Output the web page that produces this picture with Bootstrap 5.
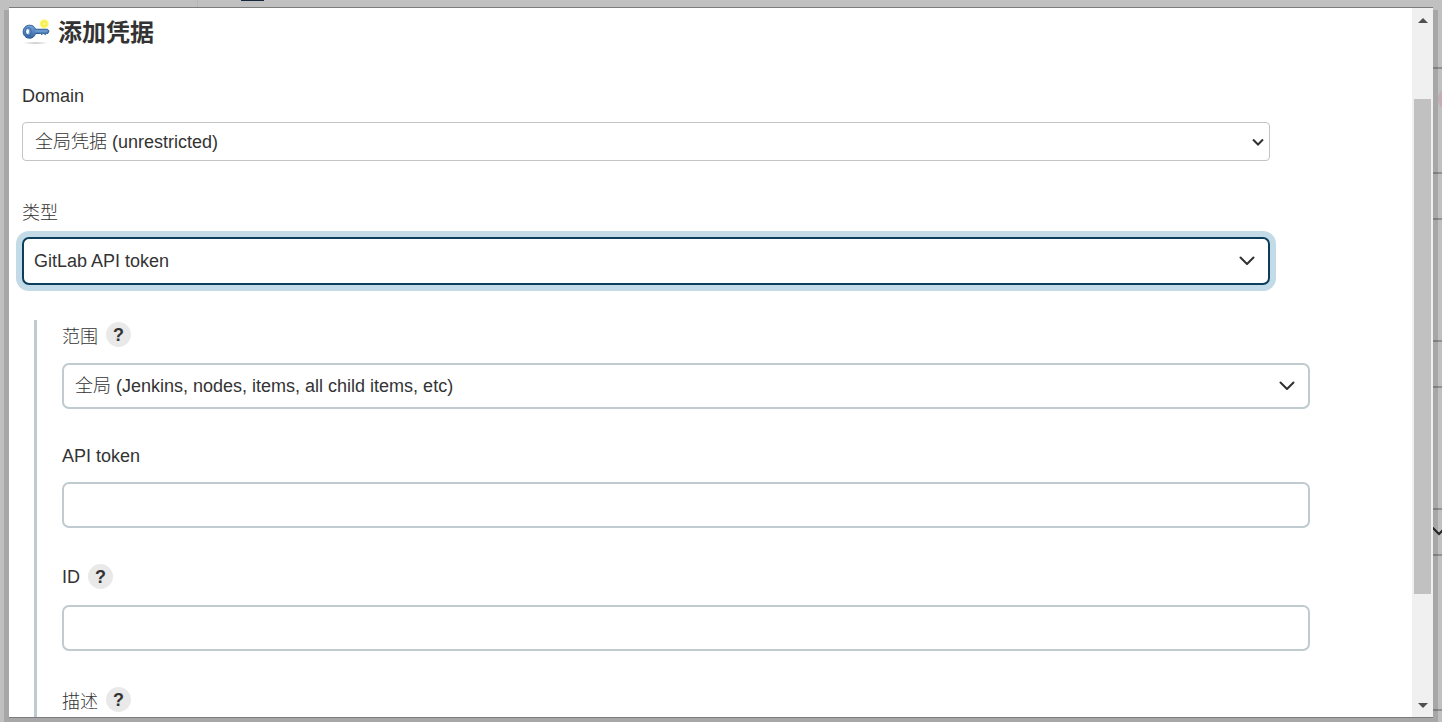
<!DOCTYPE html>
<html lang="zh-CN">
<head>
<meta charset="utf-8">
<meta name="viewport" content="width=device-width, initial-scale=1">
<title>添加凭据</title>
<link href="https://cdn.jsdelivr.net/npm/bootstrap@5.3.0/dist/css/bootstrap.min.css" rel="stylesheet">
<style>
  body { font-family: "Liberation Sans", "Noto Sans CJK SC Light", "Noto Sans CJK SC", sans-serif; font-size: 18px; font-weight: 300; line-height: 24px; color: #333; background: #c0c0c0; }
  .cjk { font-family: "Noto Sans CJK SC Light", "Noto Sans CJK SC", sans-serif; }

  /* dimmed page behind the dialog */
  .behind { inset: 0; }
  .behind-side { width: 9px; padding-top: 67px; }
  .behind-side .rule { height: 2px; background: #929292; flex: none; }
  .behind-side .box { height: 48px; border: solid #929292; border-width: 2px 0; flex: none; margin-bottom: 120px; }
  .behind-side .box:last-of-type { margin-bottom: 0; }
  .dot { width: 24px; height: 24px; margin: 18px 0 61px 5px; border-radius: 50%; background: #c2aeb2; flex: none; }
  .last-rule { margin-bottom: 11px; }
  .tab-mark { top: 0; left: 241px; width: 23px; height: 1px; background: #14273c; }
  .page-edge { top: 0; left: 197px; width: 1px; height: 8px; background: #b6b6b6; }
  .dialog-shadow { inset: 10px 4px 0; background: rgba(0, 0, 0, .13); }

  .shade { padding: 7px 9px 4px; }
  .dialog-frame { border-top: 1px solid #7c7c7c; border-bottom: 1px solid #7c7c7c; background: #fff; }
  .dialog-content { padding: 4px 142px 0 13px; }
  h1 { font-size: 24px; line-height: 38px; font-weight: 700; font-family: "Noto Sans CJK SC", sans-serif; }
  form { padding-top: 33px; }
  .first-field { margin-bottom: 37px; }
  .nested .field { margin-bottom: 34px; }
  .field-top { height: 26px; margin-bottom: 13px; }
  .field-top.with-help { height: 29px; margin-bottom: 14px; }

  .form-select, .form-control { font-size: 18px; font-weight: 300; line-height: 24px; color: #333; background-color: #fff; border: 2px solid #bfcbcf; border-radius: 7px; height: 46px; padding: 0 44px 0 11px; }
  .form-select { background-image: url("data:image/svg+xml,%3Csvg xmlns='http://www.w3.org/2000/svg' viewBox='0 0 16 10'%3E%3Cpath d='M1.5 1.5 8 8 14.500 1.500' fill='none' stroke='%23303030' stroke-width='2' stroke-linecap='round' stroke-linejoin='round'/%3E%3C/svg%3E"); background-size: 16px 10px; background-position: right 13px center; }
  .form-select.plain { height: 39px; border: 1px solid #c3c3c8; border-radius: 4px; padding-left: 12px; background-image: url("data:image/svg+xml,%3Csvg xmlns='http://www.w3.org/2000/svg' viewBox='0 0 12 8'%3E%3Cpath d='M1 1.500 6 6.500 11 1.500' fill='none' stroke='%23303030' stroke-width='2'/%3E%3C/svg%3E"); background-size: 12px 8px; background-position: right 5px center; }
  .form-select.active-field { height: 48px; padding-left: 10px; border-color: #0b3d5d; box-shadow: 0 0 0 6px #c3dae7; }
  .nested { margin: 35px -40px 0 12px; padding-left: 25px; border-left: 3px solid #bfcbcf; }
  .help { width: 25px; height: 25px; border: 0; border-radius: 50%; background: #e9e9e9; color: #333; font: 700 18px/24px "Liberation Sans", sans-serif; }

  .scroller { width: 21px; background: #f0f0f0; padding: 0 2px; }
  .scroller button { height: 24px; border: 0; background: transparent; }
  .before-thumb { flex: 67 1 0; }
  .thumb { flex: 495 1 0; background: #c1c1c1; }
  .after-thumb { flex: 99 1 0; }
</style>
</head>
<body class="vh-100 overflow-hidden position-relative">
<div class="behind position-absolute overflow-hidden d-flex justify-content-end" aria-hidden="true">
  <div class="page-edge position-absolute"></div>
  <div class="tab-mark position-absolute"></div>
  <div class="behind-side d-flex flex-column">
    <div class="rule"></div>
    <div class="dot"></div>
    <div class="box"></div>
    <div class="box"></div>
    <div class="box mb-0 d-flex align-items-center">
      <svg width="16" height="10" viewBox="0 0 16 10" class="flex-shrink-0"><path d="M-1 0 6 7 13 0" fill="none" stroke="#262626" stroke-width="2"/></svg>
    </div>
    <div class="rule last-rule mt-auto"></div>
  </div>
  <div class="dialog-shadow position-absolute"></div>
</div>

<div class="shade vh-100 position-relative">
  <main class="dialog-frame d-flex h-100">
    <div class="dialog-content flex-grow-1 overflow-hidden">
      <h1 class="d-flex align-items-center gap-2 mb-0">
        <svg width="28" height="28" viewBox="0 0 29 29" aria-hidden="true">
          <defs>
            <radialGradient id="glow"><stop offset="0" stop-color="#fffbd0"/><stop offset=".35" stop-color="#fff766"/><stop offset=".8" stop-color="#fcf55c"/><stop offset="1" stop-color="#fdf98f" stop-opacity=".3"/></radialGradient>
            <linearGradient id="steel" x2="0" y2="1"><stop offset="0" stop-color="#75a6db"/><stop offset="1" stop-color="#3465a4"/></linearGradient>
            <radialGradient id="floor"><stop offset="0" stop-color="#999" stop-opacity=".6"/><stop offset="1" stop-color="#999" stop-opacity="0"/></radialGradient>
          </defs>
          <ellipse cx="14" cy="27" rx="13" ry="1.600" fill="url(#floor)"/>
          <circle cx="23" cy="7" r="5" fill="url(#glow)"/>
          <circle cx="23" cy="7" r="2" fill="none" stroke="#e9dd35" stroke-width=".7"/>
          <path d="M8 8.500c3 0 5.200 1.500 6 4.200h12.500l1.500 1.800-1.300 2.600h-1.500l-1 1.200-1.500-1.200h-1l-1 1.200-1.500-1.200H14c-.8 3-3 4.900-6 4.900-4 0-6.800-2.900-6.800-6.700S4 8.500 8 8.500z" fill="url(#steel)" stroke="#2b588f"/>
          <ellipse cx="6.500" cy="15" rx="3" ry="4" fill="#6d9bd0" stroke="#2b588f" stroke-width=".8"/>
          <ellipse cx="5.800" cy="15" rx="1.500" ry="2.600" fill="#f4f8fc"/>
          <path d="M14 14.500h12" stroke="#85afdd" stroke-width=".8"/>
        </svg>
        添加凭据
      </h1>

      <form>
        <div class="first-field">
          <div class="field-top d-flex align-items-center"><label for="domain">Domain</label></div>
          <select id="domain" class="form-select plain"><option>全局凭据 (unrestricted)</option></select>
        </div>
        <div>
          <div class="field-top d-flex align-items-center"><label for="kind" class="cjk">类型</label></div>
          <select id="kind" class="form-select active-field"><option>GitLab API token</option></select>
        </div>

        <div class="nested">
          <div class="field">
            <div class="field-top with-help d-flex align-items-center gap-2"><label for="scope" class="cjk">范围</label><button type="button" class="help p-0">?</button></div>
            <select id="scope" class="form-select"><option>全局 (Jenkins, nodes, items, all child items, etc)</option></select>
          </div>
          <div class="field">
            <div class="field-top d-flex align-items-center"><label for="token">API token</label></div>
            <input id="token" type="password" class="form-control">
          </div>
          <div class="field">
            <div class="field-top with-help d-flex align-items-center gap-2"><label for="cred-id">ID</label><button type="button" class="help p-0">?</button></div>
            <input id="cred-id" type="text" class="form-control">
          </div>
          <div>
            <div class="field-top with-help d-flex align-items-center gap-2"><label for="desc" class="cjk">描述</label><button type="button" class="help p-0">?</button></div>
            <input id="desc" type="text" class="form-control">
          </div>
        </div>
      </form>
    </div>

    <div class="scroller d-flex flex-column flex-shrink-0">
      <button type="button" class="d-flex align-items-center justify-content-center p-0" aria-label="向上滚动"><svg width="10" height="5" viewBox="0 0 10 5"><path d="M0 5 5 0l5 5z" fill="#505050"/></svg></button>
      <div class="before-thumb"></div>
      <div class="thumb"></div>
      <div class="after-thumb"></div>
      <button type="button" class="d-flex align-items-center justify-content-center p-0" aria-label="向下滚动"><svg width="10" height="5" viewBox="0 0 10 5"><path d="M0 0h10L5 5z" fill="#505050"/></svg></button>
    </div>
  </main>
</div>
<script src="https://cdn.jsdelivr.net/npm/bootstrap@5.3.0/dist/js/bootstrap.bundle.min.js"></script>
</body>
</html>
